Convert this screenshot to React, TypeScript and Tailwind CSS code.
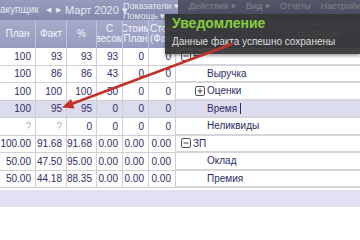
import React from "react";

type Row = {
  v: string[];
  name: string;
  level: 1 | 2;
  icon?: "plus" | "minus";
  active?: boolean;
};

const rows: Row[] = [
  { v: ["100", "93", "93", "93", "0", "0"], name: "Р", level: 1, icon: "minus" },
  { v: ["100", "86", "86", "43", "0", "0"], name: "Выручка", level: 2 },
  { v: ["100", "100", "100", "50", "0", "0"], name: "Оценки", level: 2, icon: "plus" },
  { v: ["100", "95", "95", "0", "0", "0"], name: "Время", level: 2, active: true },
  { v: ["?", "?", "0", "0", "0", "0"], name: "Неликвиды", level: 2 },
  { v: ["100.00", "91.68", "91.68", "0.00", "0.00", "0.00"], name: "ЗП", level: 1, icon: "minus" },
  { v: ["50.00", "47.50", "95.00", "0.00", "0.00", "0.00"], name: "Оклад", level: 2 },
  { v: ["50.00", "44.18", "88.35", "0.00", "0.00", "0.00"], name: "Премия", level: 2 },
];

const cols = "grid grid-cols-[36px_31px_30px_26px_26px_27px_1fr]";

function TreeIcon({ kind }: { kind: "plus" | "minus" }) {
  return (
    <svg width="10" height="10" viewBox="0 0 10 10" className="shrink-0">
      <rect x="0.5" y="0.5" width="9" height="9" rx="1.5" fill="white" stroke="#555" />
      <line x1="2.5" y1="5" x2="7.5" y2="5" stroke="#444" strokeWidth="1" />
      {kind === "plus" && <line x1="5" y1="2.5" x2="5" y2="7.5" stroke="#444" strokeWidth="1" />}
    </svg>
  );
}

export default function App() {
  return (
    <div className="relative w-[360px] h-[240px] overflow-hidden bg-white font-['Liberation_Sans',Arial,sans-serif]">
      {/* top bar */}
      <div className="flex h-[20px] bg-gradient-to-b from-[#989dbe] to-[#8287aa] text-[#e6e8f3] whitespace-nowrap">
        <div className="w-[46px] shrink-0 text-[10px] leading-[20px]">акупщик</div>
        <div className="flex shrink-0 items-center gap-[5px] text-[7px] leading-[20px] w-[19px]">
          <span>◀</span>
          <span>▶</span>
        </div>
        <div className="w-[58px] shrink-0 text-[11px] leading-[20px]">Март 2020 ▾</div>
        <div className="flex flex-col min-w-0 text-[9px] leading-[10px] pt-[1px] overflow-hidden">
          <div className="flex gap-[10px]">
            <span>Показатели ▾</span>
            <span>Действия ▾</span>
            <span>Вид ▾</span>
            <span>Отчеты</span>
            <span>Настройки ▾</span>
          </div>
          <div>Помощь ▾</div>
        </div>
      </div>

      {/* header */}
      <div className={`${cols} h-[28px] bg-gradient-to-b from-[#a6abcb] to-[#979cbf] text-[#f5f5fb] text-[10px] leading-[10px]`}>
        <div className="flex items-center justify-center border-r border-[#bfc3dc]">План</div>
        <div className="flex items-center justify-center border-r border-[#bfc3dc]">Факт</div>
        <div className="flex items-center justify-center border-r border-[#bfc3dc]">%</div>
        <div className="flex flex-col items-center justify-center overflow-hidden border-r border-[#bfc3dc]">
          <span>С</span>
          <span>весом</span>
        </div>
        <div className="flex flex-col items-center justify-center overflow-hidden border-r border-[#bfc3dc]">
          <span>Стоим</span>
          <span>(План)</span>
        </div>
        <div className="flex flex-col items-start pl-[1px] justify-center overflow-hidden border-r border-[#bfc3dc]">
          <span>Стоим</span>
          <span>(Факт)</span>
        </div>
        <div className="flex items-center pl-[121px]">Название</div>
      </div>

      {/* body */}
      <div className="text-[10px] text-[#2b2d66]">
        {rows.map((r, i) => (
          <div
            key={i}
            className={`${cols} h-[17.5px] ${r.active ? "bg-[#dcdcef]" : "bg-white"}`}
          >
            {r.v.map((c, j) => (
              <div
                key={j}
                className={`flex items-center justify-end pr-[4px] border-r border-b border-[#cfcfd6] ${c === "?" ? "text-[#b0b0b8]" : ""}`}
              >
                {c}
              </div>
            ))}
            <div
              className={`flex items-center gap-[2px] border-b-2 border-[#d6d6da] ${
                r.level === 1 ? "pl-[5px]" : r.icon ? "pl-[19px]" : "pl-[31px]"
              }`}
            >
              {r.icon && <TreeIcon kind={r.icon} />}
              <span>{r.name}</span>
              {r.active && <span className="w-px h-[11px] bg-[#2b2d66] ml-[1px]" />}
            </div>
          </div>
        ))}
        <div className="h-[17px] mt-[2px] bg-[#e1e1f3]" />
      </div>

      {/* notification */}
      <div className="absolute left-[165px] top-0 right-0 h-[54px] flex flex-col">
        <div className="ml-[13px] h-[14px] bg-black/45" />
        <div className="flex-1 bg-[#2f2f2f]/90 pl-[7px] pt-[1px] shadow-[0_2px_3px_rgba(0,0,0,0.35)]">
          <div className="text-[14px] font-bold leading-[17px] text-[#86cf3a]">Уведомление</div>
          <div className="text-[10px] leading-[14px] mt-[3px] text-[#dedede]">Данные факта успешно сохранены</div>
        </div>
      </div>

      {/* arrow */}
      <svg className="absolute left-0 top-0 pointer-events-none" width="360" height="240">
        <line x1="232" y1="44" x2="70" y2="104.5" stroke="#c5302a" strokeWidth="2.5" strokeLinecap="round" />
        <polygon points="62,107.5 71,99 74.5,108.5" fill="#c5302a" />
      </svg>
    </div>
  );
}
